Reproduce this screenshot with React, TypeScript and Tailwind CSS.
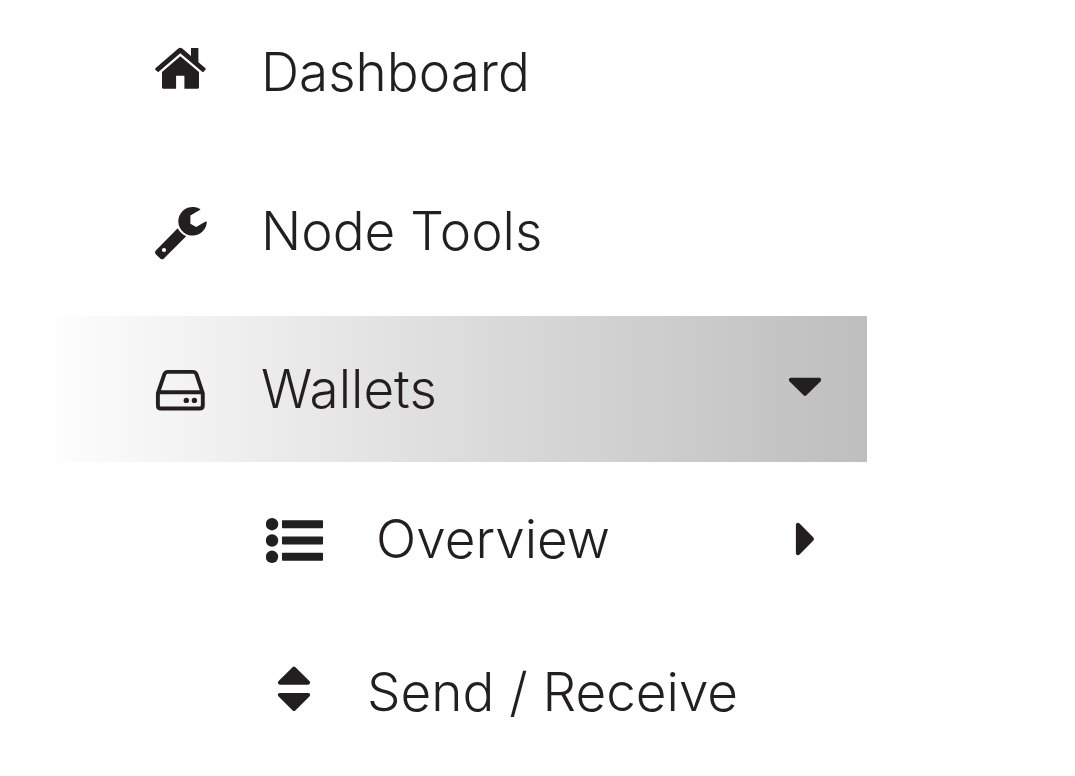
import type { ReactNode } from "react";

function HomeIcon() {
  return (
    <svg width="54" height="52" viewBox="0 0 54 52" fill="currentColor" aria-hidden="true">
      <path d="M1.4 22.2 24.3 2.6Q26.3 1.1 28.3 2.6L37 10V2h7.4v14.2l7.1 6Q52 23 51.4 23.7L49.6 25.7Q48.9 26.2 48.2 25.7L26.3 7.2 4.7 25.7Q4 26.2 3.3 25.6L1.3 23.7Q.8 23 1.4 22.2Z" />
      <path d="M26.3 10.3 45 26v15.2q0 1.5-1.5 1.5H30.4v-13h-8.3v13H9.5Q8 42.7 8 41.2V26Z" />
    </svg>
  );
}

function WrenchIcon() {
  return (
    <svg width="54" height="62" viewBox="0 -6 54 62" fill="currentColor" aria-hidden="true">
      <path d="M46.2 3.8 36.4 9.4V17.7L42.2 21 51.6 15.6Q52.9 15 52.8 16.8A14.3 14.3 0 1 1 45.6 2.8Q46.8 3.4 46.2 3.8Z" />
      <path
        fillRule="evenodd"
        d="M23.7 22.2Q26.5 27.5 32.2 30.2L10 52.4Q8.3 54.1 6.5 52.7L2 48.4Q.2 46.6 1.8 44.6ZM10 41.9a2.1 2.1 0 1 0 0 4.2 2.1 2.1 0 0 0 0-4.2Z"
      />
    </svg>
  );
}

function DriveIcon() {
  return (
    <svg width="54" height="46" viewBox="0 -2 54 46" fill="none" stroke="currentColor" strokeWidth="3.9" aria-hidden="true">
      <path d="M3.9 25.2 10.3 6.4Q11.2 3.9 13.8 3.9H39Q41.6 3.9 42.5 6.4L48.8 25.2V37.5Q48.8 40.5 45.8 40.5H6.9Q3.9 40.5 3.9 37.5ZM3.9 24.3H48.8" />
      <circle cx="32.3" cy="32.4" r="2.7" fill="currentColor" stroke="none" />
      <circle cx="40.4" cy="32.4" r="2.7" fill="currentColor" stroke="none" />
    </svg>
  );
}

function ListIcon() {
  return (
    <svg width="58" height="50" viewBox="0 -4 58 50" fill="currentColor" aria-hidden="true">
      <circle cx="6" cy="6.2" r="6.2" />
      <circle cx="6" cy="22.5" r="6.2" />
      <circle cx="6" cy="38.8" r="6.2" />
      <rect x="16" y="2.2" width="41" height="8" rx="0.7" />
      <rect x="16" y="18.5" width="41" height="8" rx="0.7" />
      <rect x="16" y="34.8" width="41" height="8" rx="0.7" />
    </svg>
  );
}

function SortIcon() {
  return (
    <svg width="34" height="52" viewBox="0 0 34 52" fill="currentColor" aria-hidden="true">
      <path d="M15.6 1.2Q17 0 18.4 1.2L32.4 15Q33.6 16.4 33 17.6 32.4 18.7 31 18.7H3Q1.6 18.7 1 17.6.4 16.4 1.6 15Z" />
      <path d="M15.6 44.4Q17 45.6 18.4 44.4L32.4 30.6Q33.6 29.2 33 28 32.4 26.9 31 26.9H3Q1.6 26.9 1 28 .4 29.2 1.6 30.6Z" />
    </svg>
  );
}

function CaretIcon({ open }: { open: boolean }) {
  return (
    <svg width="34" height="34" viewBox="0 0 34 34" fill="currentColor" aria-hidden="true">
      {open ? (
        <path d="M15.6 23.3Q17 24.5 18.4 23.3L32.4 9.5Q33.6 8.1 33 6.9 32.4 5.8 31 5.8H3Q1.6 5.8 1 6.9 .4 8.1 1.6 9.5Z" />
      ) : (
        <path d="M25.4 18.4Q26.6 17 25.4 15.6L11.6 1.6Q10.2.4 9 1 7.9 1.6 7.9 3V31Q7.9 32.4 9 33 10.2 33.6 11.6 32.4Z" />
      )}
    </svg>
  );
}

function Row({ className, icon, label, caret }: { className: string; icon: ReactNode; label: string; caret?: ReactNode }) {
  return (
    <a href="#" className={`flex items-center ${className}`}>
      {icon}
      <span className="grow whitespace-nowrap">{label}</span>
      {caret}
    </a>
  );
}

export default function App() {
  return (
    <main className="min-h-screen bg-white">
      <nav
        aria-label="Main"
        className="mr-52 ml-9 font-['Inter',sans-serif] text-[53px] leading-[64px] font-light text-[#231f20]"
      >
        <ul>
          <li>
            <Row className="h-[158px] gap-[53px] pb-[14px] pl-[118px]" icon={<HomeIcon />} label="Dashboard" />
          </li>
          <li>
            <Row className="h-[158px] gap-[53px] pb-3 pl-[118px]" icon={<WrenchIcon />} label="Node Tools" />
          </li>
          <li>
            <Row
              className="h-[146px] gap-[53px] bg-linear-to-r from-white via-[#dddddd] to-[#bebebe] pr-[45px] pl-[118px]"
              icon={<DriveIcon />}
              label="Wallets"
              caret={<CaretIcon open />}
            />
            <ul>
              <li>
                <Row
                  className="h-[154px] gap-[52px] pr-[45px] pl-[230px]"
                  icon={<ListIcon />}
                  label="Overview"
                  caret={<CaretIcon open={false} />}
                />
              </li>
              <li>
                <Row className="h-[154px] gap-[56px] pb-[2px] pl-[241px]" icon={<SortIcon />} label="Send / Receive" />
              </li>
            </ul>
          </li>
        </ul>
      </nav>
    </main>
  );
}
